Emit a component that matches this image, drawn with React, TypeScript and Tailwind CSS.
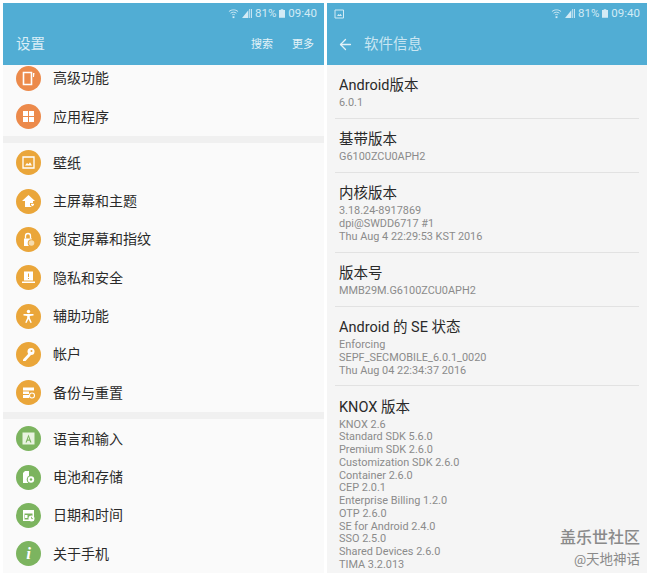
import type { ReactNode } from 'react'
import { ArrowLeft } from 'lucide-react'

const FONT = "font-['Roboto','Noto_Sans_CJK_SC',sans-serif]"

function StatusIcons() {
  return (
    <div className="flex items-center text-[11.500px] leading-none text-[#d3ebf5]">
      <svg width="11" height="11" viewBox="0 0 12 11" className="mr-[3px]">
        <path d="M1 3.400C4 .9 8 .9 11 3.400M2.800 5.200c2-1.500 4.400-1.500 6.400 0M4.500 7c1-.7 2-.7 3 0" fill="none" stroke="#d3ebf5" strokeWidth="1" />
        <path d="M5 8.500h2v2H5z" fill="#d3ebf5" />
      </svg>
      <svg width="10" height="9" viewBox="0 0 11 10" className="mr-[3px]">
        <path d="M0 10 7 1.500V10zM8 0h1v10H8zM10 0h1v10h-1z" fill="#d3ebf5" />
      </svg>
      <span>81%</span>
      <svg width="6" height="9" viewBox="0 0 7 10" className="mx-[3px]">
        <path d="M2 0h3v1h2v9H0V1h2z" fill="#d3ebf5" />
      </svg>
      <span>09:40</span>
    </div>
  )
}

const white = { fill: 'white' }

const icons: Record<string, ReactNode> = {
  advanced: (
    <>
      <path d="M7.500 6.500h8v12h-8z" fill="none" stroke="white" strokeWidth="1.600" />
      <path d="M17 7h1.500l-.5 4h-1z" {...white} />
    </>
  ),
  apps: <path d="M7 7h5v5H7zM13 7h5v5h-5zM7 13h5v5H7zM13 13h5v5h-5z" {...white} />,
  wallpaper: (
    <>
      <path d="M7 7h11v11H7z" fill="none" stroke="white" strokeWidth="1.300" />
      <path d="M9 15.500l2-2.500 1.500 1.200 1.500-2 2 3.300z" {...white} />
    </>
  ),
  home: (
    <>
      <path d="M12.500 6 19 12h-2v6H9v-6H6z" {...white} />
      <path d="M14 14h5v2.500l-2.500 2-2.500-2z" fill="#eaa63a" />
      <path d="M15 14.800h3v1.300l-1.500 1.200-1.500-1.200z" {...white} />
    </>
  ),
  lock: (
    <>
      <path d="M8 11.500h8v7.500H8z" {...white} />
      <path d="M9.500 11.500V9a2.500 2.500 0 0 1 5 0v2.500" fill="none" stroke="white" strokeWidth="1.300" />
      <circle cx="15.500" cy="16" r="3.800" fill="#eaa63a" />
      <circle cx="15.500" cy="16" r="2.800" fill="#f6dcae" />
    </>
  ),
  privacy: <path fillRule="evenodd" d="M8 6.500h9v9H8zM12 8.500v3.500h1V8.500zM12 13v1h1v-1zM6 16.500h13V18H6z" {...white} />,
  access: (
    <>
      <circle cx="12.500" cy="7.500" r="1.700" {...white} />
      <path d="M7.500 10h10v1.400l-3.700.6v2l2 4.500-1.300.5-2-4-2 4-1.300-.5 2-4.500v-2l-3.700-.6z" {...white} />
    </>
  ),
  account: (
    <>
      <circle cx="15" cy="9.500" r="3.500" {...white} />
      <path d="M13 11 7 17.500v1.500h2.500L15 13z" {...white} />
      <circle cx="15.500" cy="9" r="1" fill="#eaa63a" />
    </>
  ),
  backup: (
    <>
      <path d="M7 7.500h11v3H7zM7 11.500h6v2.500H7zM7 15h6v3H7z" {...white} />
      <circle cx="16" cy="15.500" r="2.500" fill="none" stroke="white" strokeWidth="1.100" />
    </>
  ),
  language: (
    <>
      <path d="M6.500 6.500h12v12h-12z" fill="#e8f3e0" />
      <path d="M12.500 8.500l-3 8h1.300l.6-1.800h2.200l.6 1.800h1.300l-3-8zm-.7 5 .7-2.400.7 2.400z" fill="#7cb45f" />
    </>
  ),
  battery: (
    <>
      <path d="M7 8l2-2h4v12H7z" {...white} />
      <circle cx="15" cy="14.500" r="4.300" fill="#7cb45f" />
      <circle cx="15" cy="14.500" r="3.200" {...white} />
      <circle cx="15" cy="14.500" r="1.200" fill="#7cb45f" />
    </>
  ),
  date: (
    <>
      <path d="M7 7h11v11H7z" {...white} />
      <path d="M8.500 10.500h8V16.500h-8z" fill="#7cb45f" />
      <path d="M9 12h2.500v3H9z" {...white} />
      <circle cx="15.500" cy="15.500" r="3" {...white} />
      <path d="M15.500 13.800v1.800h1.500" fill="none" stroke="#7cb45f" strokeWidth=".8" />
    </>
  ),
}

const ORANGE = 'bg-[#ec8a4b]'
const YELLOW = 'bg-[#eaa63a]'
const GREEN = 'bg-[#7cb45f]'

type Row = { label: string; icon: string; color: string }

const groups: Row[][] = [
  [
    { label: '高级功能', icon: 'advanced', color: ORANGE },
    { label: '应用程序', icon: 'apps', color: ORANGE },
  ],
  [
    { label: '壁纸', icon: 'wallpaper', color: YELLOW },
    { label: '主屏幕和主题', icon: 'home', color: YELLOW },
    { label: '锁定屏幕和指纹', icon: 'lock', color: YELLOW },
    { label: '隐私和安全', icon: 'privacy', color: YELLOW },
    { label: '辅助功能', icon: 'access', color: YELLOW },
    { label: '帐户', icon: 'account', color: YELLOW },
    { label: '备份与重置', icon: 'backup', color: YELLOW },
  ],
  [
    { label: '语言和输入', icon: 'language', color: GREEN },
    { label: '电池和存储', icon: 'battery', color: GREEN },
    { label: '日期和时间', icon: 'date', color: GREEN },
    { label: '关于手机', icon: 'about', color: GREEN },
  ],
]

function SettingRow({ row }: { row: Row }) {
  return (
    <div className="flex h-[38.3px] items-center pl-[13px]">
      <div className={`flex h-[25px] w-[25px] items-center justify-center rounded-full ${row.color}`}>
        {row.icon === 'about' ? (
          <span className="font-['Liberation_Serif',serif] text-[17px] font-bold italic leading-none text-white">i</span>
        ) : (
          <svg width="25" height="25" viewBox="0 0 25 25">
            {icons[row.icon]}
          </svg>
        )}
      </div>
      <span className="ml-3 text-[14px] leading-none text-[#2a2a2a]">{row.label}</span>
    </div>
  )
}

type Section = { title: string; lines: string[] }

const sections: Section[] = [
  { title: 'Android版本', lines: ['6.0.1'] },
  { title: '基带版本', lines: ['G6100ZCU0APH2'] },
  { title: '内核版本', lines: ['3.18.24-8917869', 'dpi@SWDD6717 #1', 'Thu Aug 4 22:29:53 KST 2016'] },
  { title: '版本号', lines: ['MMB29M.G6100ZCU0APH2'] },
  { title: 'Android 的 SE 状态', lines: ['Enforcing', 'SEPF_SECMOBILE_6.0.1_0020', 'Thu Aug 04 22:34:37 2016'] },
  {
    title: 'KNOX 版本',
    lines: [
      'KNOX 2.6',
      'Standard SDK 5.6.0',
      'Premium SDK 2.6.0',
      'Customization SDK 2.6.0',
      'Container 2.6.0',
      'CEP 2.0.1',
      'Enterprise Billing 1.2.0',
      'OTP 2.6.0',
      'SE for Android 2.4.0',
      'SSO 2.5.0',
      'Shared Devices 2.6.0',
      'TIMA 3.2.013',
    ],
  },
]

function InfoSection({ section }: { section: Section }) {
  return (
    <div className="mx-2 border-b border-[#e2e2e2] px-1 pb-[8.200px] pt-[12.200px] first:pt-[12.800px] last:border-b-0">
      <div className="h-[17px] text-[14.500px] leading-[17px] text-[#2a2a2a]">{section.title}</div>
      <div className="mt-[3px] text-[10.900px] leading-[12.730px] text-[#8b8b8b]">
        {section.lines.map((line) => (
          <div key={line}>{line}</div>
        ))}
      </div>
    </div>
  )
}

export default function App() {
  return (
    <div className={`flex h-[576px] w-[650px] gap-[3px] overflow-hidden bg-white p-[3px] ${FONT}`}>
      <div className="flex w-[321px] flex-col overflow-hidden bg-[#fafafa]">
        <div className="relative z-10 h-[62px] shrink-0 bg-[#51add4] pl-[13px] pr-[7px]">
          <div className="flex h-[21px] items-center justify-end">
            <StatusIcons />
          </div>
          <div className="flex h-[41px] items-center justify-between pr-[3px] pt-[1px]">
            <span className="text-[14.500px] text-[#d9eef7]">设置</span>
            <div className="flex gap-[19px] text-[11px] text-[#e3f2f8]">
              <span>搜索</span>
              <span>更多</span>
            </div>
          </div>
        </div>
        <div className="-mt-[5.700px]">
          {groups.map((group, i) => (
            <div key={i} className={i > 0 ? 'mt-[0.55px] border-t-[7px] border-[#f0f0f0] pt-[0.3px]' : ''}>
              {group.map((row) => (
                <SettingRow key={row.label} row={row} />
              ))}
            </div>
          ))}
        </div>
      </div>
      <div className="relative flex w-[320px] flex-col overflow-hidden bg-[#f5f5f5]">
        <div className="h-[62px] shrink-0 bg-[#51add4] pl-[7px] pr-[7px]">
          <div className="flex h-[21px] items-center justify-between">
            <svg width="11" height="10" viewBox="0 0 11 10">
              <path d="M1 1h8.500v8H1z" fill="none" stroke="#d3ebf5" strokeWidth="1" />
              <path d="M3 7l1.500-2 1 1 1-1.300L8 7z" fill="#d3ebf5" />
            </svg>
            <StatusIcons />
          </div>
          <div className="flex h-[41px] items-center pl-[3px]">
            <ArrowLeft size={17} strokeWidth={1.800} className="text-[#e3f2f8]" />
            <span className="ml-[10px] text-[14.500px] text-[#c9e6f2]">软件信息</span>
          </div>
        </div>
        {sections.map((section) => (
          <InfoSection key={section.title} section={section} />
        ))}
        <div className="absolute bottom-[4px] right-[7px] text-right text-[#8a8a8a]">
          <div className="text-[16px] font-medium leading-[22px]">盖乐世社区</div>
          <div className="text-[13.500px] leading-[20px]">@天地神话</div>
        </div>
      </div>
    </div>
  )
}
